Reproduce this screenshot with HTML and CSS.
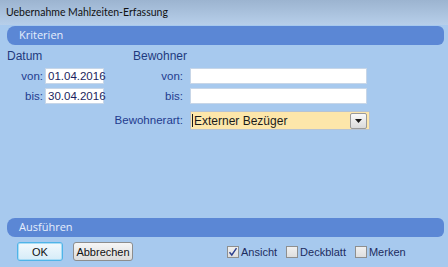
FILE: index.html
```html
<!DOCTYPE html>
<html lang="de">
<head>
  <meta charset="UTF-8">
  <title>Uebernahme Mahlzeiten-Erfassung</title>
  <link rel="stylesheet" href="styles.css">
</head>
<body>
  <div class="window">
    <div class="titlebar">Uebernahme Mahlzeiten-Erfassung</div>

    <div class="section-bar">Kriterien</div>
    <div class="criteria">
      <div class="head head-datum">Datum</div>
      <div class="head head-bewohner">Bewohner</div>

      <div class="label">von:</div>
      <div class="field date">01.04.2016</div>
      <div class="label">von:</div>
      <div class="field wide"></div>

      <div class="label">bis:</div>
      <div class="field date">30.04.2016</div>
      <div class="label">bis:</div>
      <div class="field wide"></div>

      <div class="label art-label">Bewohnerart:</div>
      <div class="select">
        <span class="caret"></span>
        <span class="select-text">Externer Bezüger</span>
        <span class="select-btn">
          <svg width="7" height="4" viewBox="0 0 7 4"><path d="M0 0h7L3.5 4z" fill="#1a1a1a"/></svg>
        </span>
      </div>
    </div>

    <div class="section-bar">Ausführen</div>
    <div class="actions">
      <button class="btn btn-ok">OK</button>
      <button class="btn">Abbrechen</button>
      <div class="checks">
        <label class="check">
          <span class="box">
            <svg width="10" height="10" viewBox="0 0 10 10"><path d="M1.5 5.2 L3.8 8 L8.5 1.2" fill="none" stroke="#2b3f8f" stroke-width="1.4"/></svg>
          </span>Ansicht
        </label>
        <label class="check"><span class="box"></span>Deckblatt</label>
        <label class="check"><span class="box"></span>Merken</label>
      </div>
    </div>
  </div>
</body>
</html>
```

FILE: styles.css
```css
body {
  margin: 0;
  background-color: #a7c9ee;
  font-family: 'Liberation Sans', Arial, sans-serif;
  font-size: 11.5px;
}
.window {
  width: 448px;
  height: 267px;
  display: flex;
  flex-direction: column;
  background-color: #a7c9ee;
}
.titlebar {
  height: 25px;
  line-height: 24px;
  padding-left: 6px;
  background: linear-gradient(#9cb4d0, #b7cfea);
  color: #111;
  font-family: 'Lato', sans-serif;
  font-size: 10.5px;
}
.section-bar {
  margin: 1px 4px 0 7px;
  height: 19px;
  line-height: 18px;
  padding-left: 12px;
  background-color: #5b87d5;
  border-radius: 8px 6px 6px 8px;
  color: #e6eefc;
  font-family: 'Open Sans', sans-serif;
  font-size: 11px;
}
.criteria {
  display: grid;
  grid-template-columns: 38px 61px 84px 180px;
  grid-template-rows: 16px 16px 16px 19px;
  row-gap: 4px;
  padding: 3px 0 0 7px;
  color: #233b8e;
}
.head {
  line-height: 16px;
  font-size: 12px;
  color: #1f3a7e;
}
.head-datum {
  grid-column: 1 / 3;
}
.head-bewohner {
  grid-column: 3 / 5;
  margin-left: 27px;
}
.label {
  text-align: right;
  padding-right: 2px;
  line-height: 16px;
}
.label:nth-child(5),
.label:nth-child(9),
.art-label {
  padding-right: 7px;
}
.art-label {
  grid-column: 1 / 4;
  margin-top: 3px;
  line-height: 19px;
}
.field {
  height: 16px;
  box-sizing: border-box;
  background-color: #fff;
  border: 1px solid #c7d6e8;
  color: #1b1f5e;
  line-height: 14px;
  padding-left: 2px;
}
.date {
  width: 59px;
}
.wide {
  width: 177px;
}
.select {
  margin-top: 3px;
  width: 180px;
  height: 19px;
  box-sizing: border-box;
  display: flex;
  align-items: center;
  background-color: #fde6aa;
  border: 1px solid #b7c3d3;
}
.caret {
  width: 1px;
  height: 13px;
  margin-left: 1px;
  background-color: #1a1a1a;
}
.select-text {
  flex: 1;
  padding-left: 1px;
  font-size: 12px;
  color: #1a1a1a;
}
.select-btn {
  width: 15px;
  height: 14px;
  margin-right: 2px;
  display: flex;
  align-items: center;
  justify-content: center;
  background: linear-gradient(#fafafa, #dadada);
  border: 1px solid #9a9a9a;
  border-radius: 2px;
}
.criteria + .section-bar {
  margin-top: auto;
}
.actions {
  display: flex;
  align-items: center;
  height: 19px;
  margin: 5px 0 6px 17px;
}
.btn {
  height: 19px;
  box-sizing: border-box;
  padding: 0;
  font-family: 'Liberation Sans', Arial, sans-serif;
  font-size: 11px;
  color: #111;
  background: linear-gradient(#f6f6f6, #dcdcdc);
  border: 1px solid #8d8d8d;
  border-radius: 3px;
  width: 60px;
  margin-right: 10px;
}
.btn-ok {
  width: 46px;
  background: linear-gradient(#f2f9fd, #d6ecf8);
  border-color: #4fb4e8;
  box-shadow: inset 0 0 0 1px #a8dcf6;
}
.checks {
  display: flex;
  margin-left: 84px;
}
.check {
  display: flex;
  align-items: center;
  color: #1d2c5e;
  font-size: 11px;
  margin-right: 9px;
}
.box {
  width: 12px;
  height: 12px;
  box-sizing: border-box;
  margin-right: 2px;
  display: flex;
  align-items: center;
  justify-content: center;
  background: linear-gradient(#f0f0f0, #dedede);
  border: 1px solid #8e8f8f;
}
```
